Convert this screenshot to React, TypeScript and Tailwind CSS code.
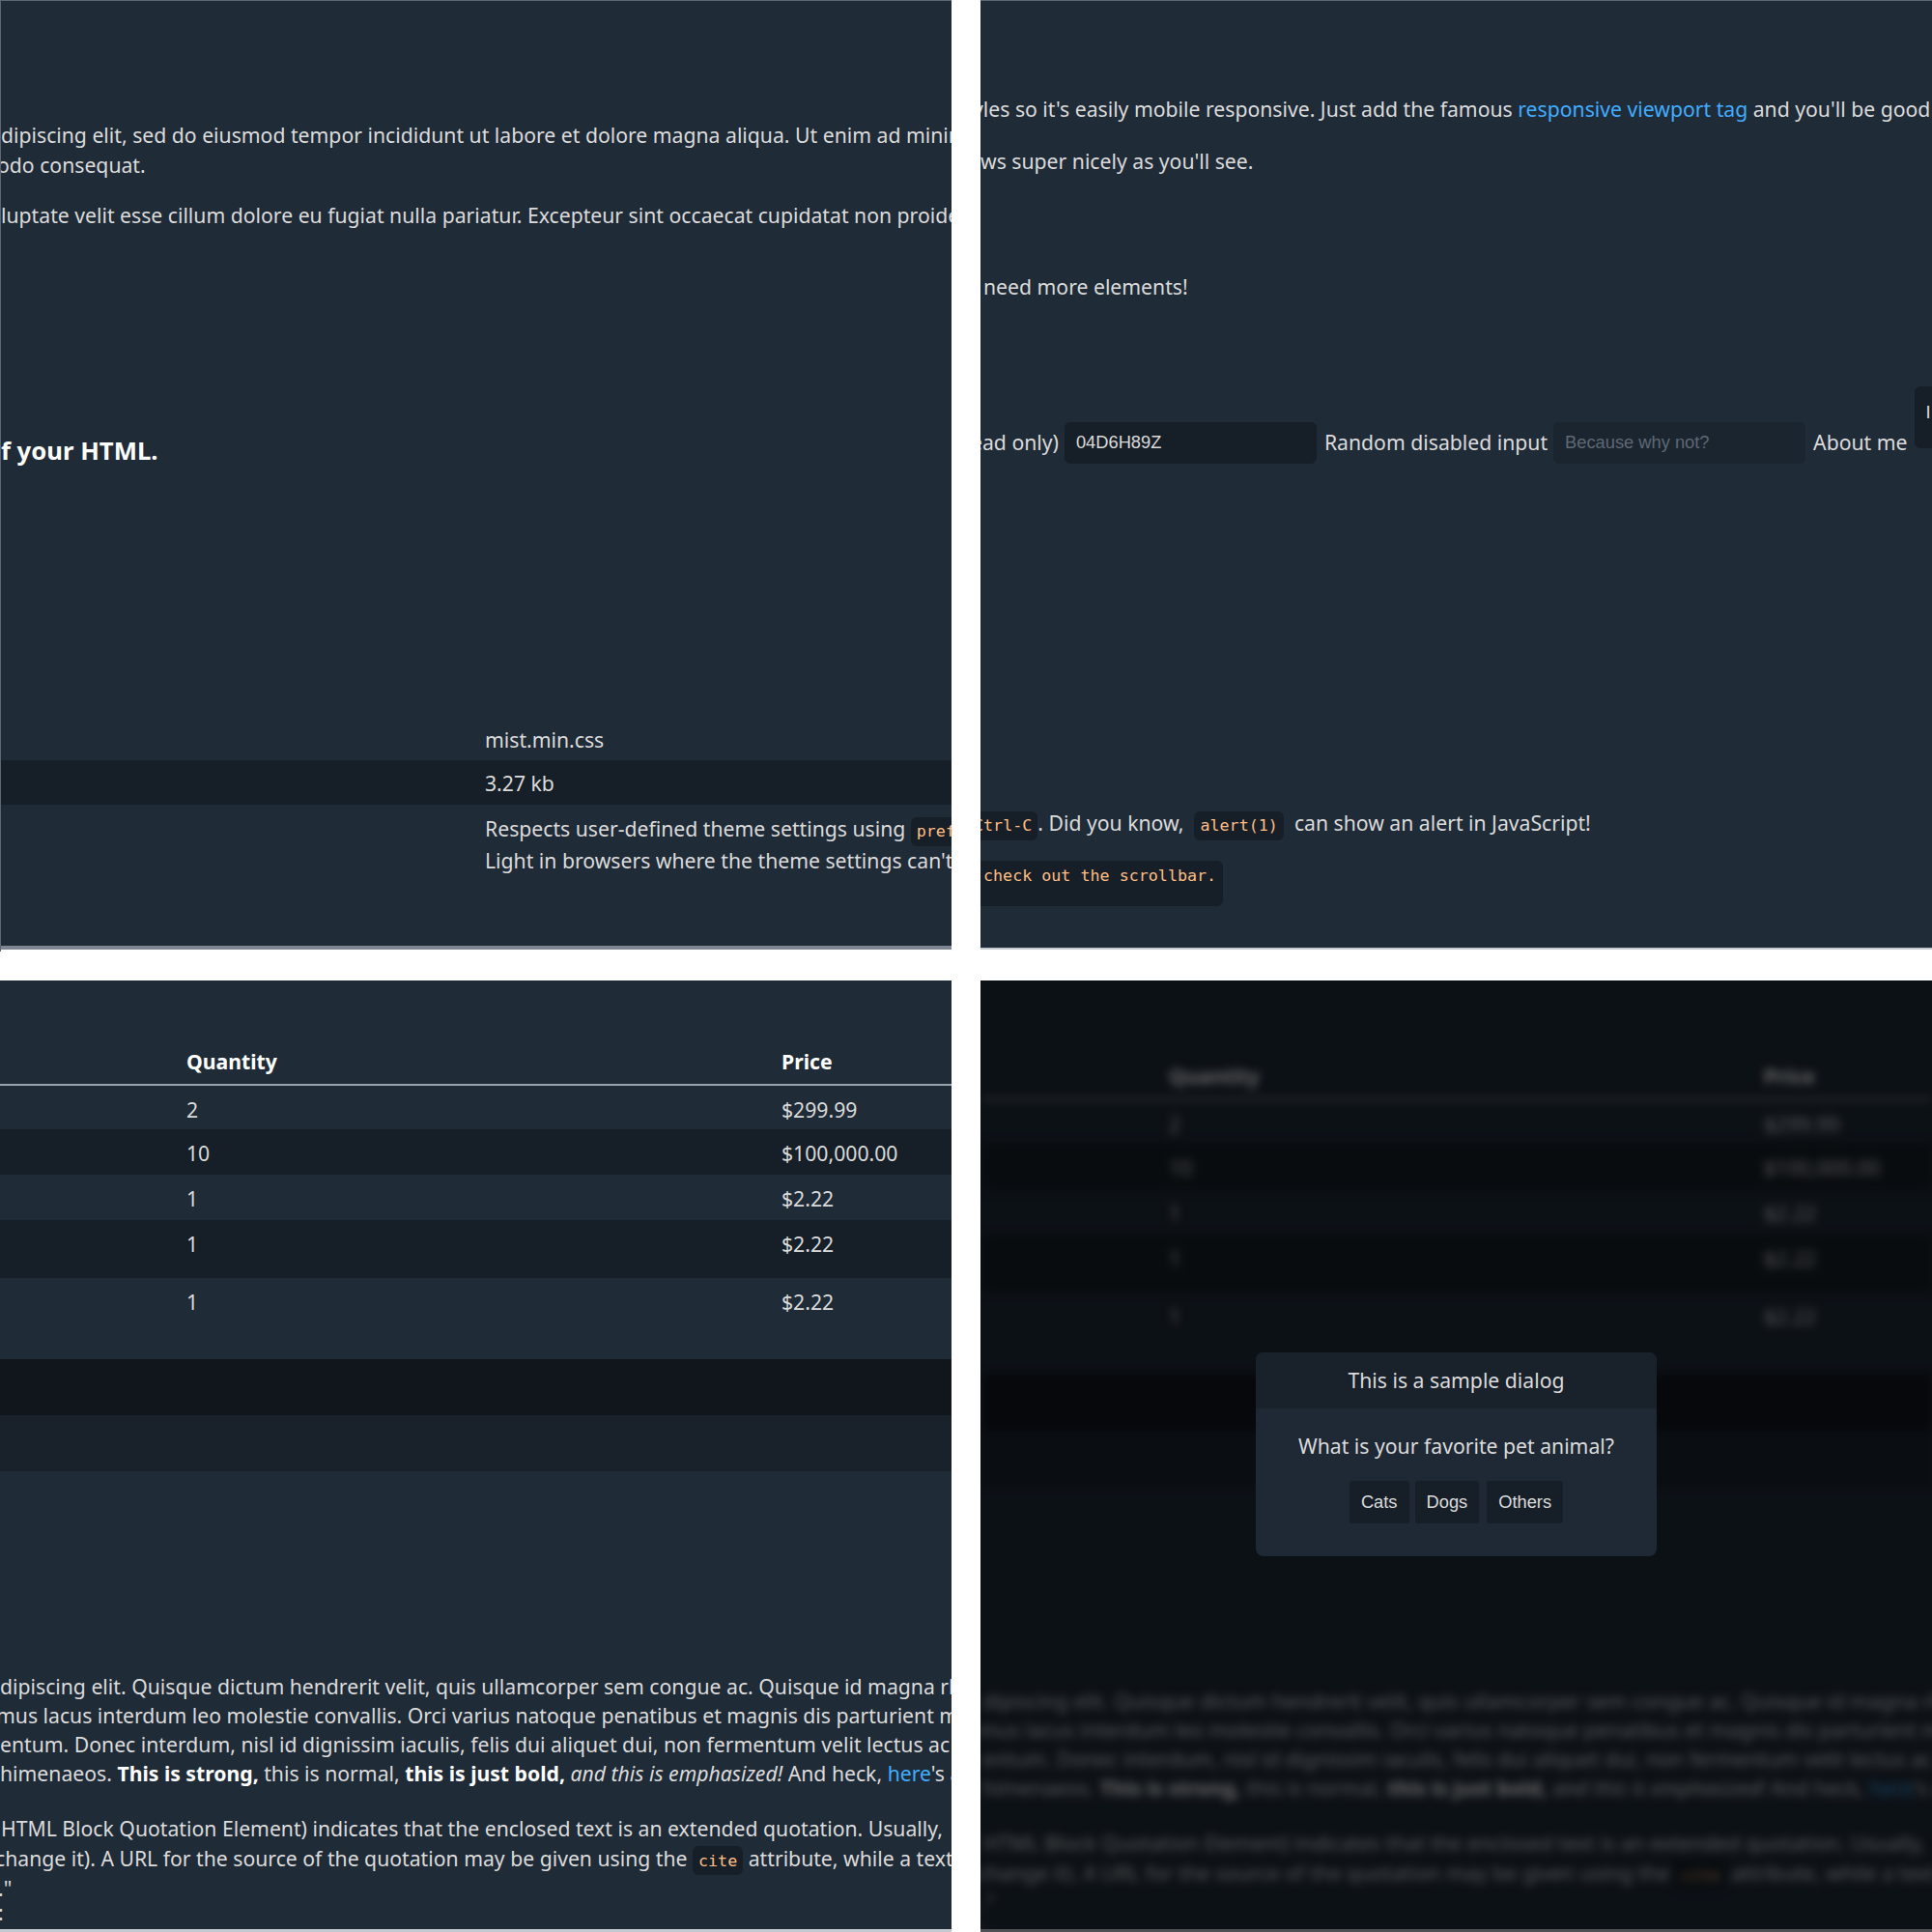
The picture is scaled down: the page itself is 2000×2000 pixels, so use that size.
import React from "react";

const mono = "font-['DejaVu_Sans_Mono',monospace]";
const arial = "font-['Liberation_Sans',Arial,sans-serif]";

function Code({ children, className = "" }: { children: React.ReactNode; className?: string }) {
  return (
    <code
      className={`${mono} inline-block bg-[#161f27] text-[#ffbe85] text-[16.7px] leading-[23px] px-[6px] py-[3.5px] rounded-[6px] align-baseline ${className}`}
    >
      {children}
    </code>
  );
}

function TopLeft() {
  return (
    <div className="flex flex-col overflow-hidden bg-[#202b38] border-t border-l border-[#5d6672]">
      <div className="flex-1 min-h-0 pt-[124px]">
        <p className="whitespace-nowrap">
          dipiscing elit, sed do eiusmod tempor incididunt ut labore et dolore magna aliqua. Ut enim ad minim veniam, quis nostrud
        </p>
        <p className="whitespace-nowrap -ml-[4px]">odo consequat.</p>
        <p className="mt-[21px] whitespace-nowrap">
          luptate velit esse cillum dolore eu fugiat nulla pariatur. Excepteur sint occaecat cupidatat non proident, sunt in culpa
        </p>
        <h3 className="mt-[211px] text-[25.7px] leading-[36px] font-bold text-white whitespace-nowrap">f your HTML.</h3>
        <div className="mt-[256px]">
          <div className="h-[46px] pt-[10px] pl-[501px] whitespace-nowrap">mist.min.css</div>
          <div className="h-[46px] pt-[9px] pl-[501px] whitespace-nowrap bg-[#161f27]">3.27 kb</div>
          <div className="pt-[10px] pl-[501px] whitespace-nowrap">
            Respects user-defined theme settings using <Code>prefers-color-scheme</Code>. Defaults to
            <br />
            Light in browsers where the theme settings can't be detected.
          </div>
        </div>
      </div>
      <div className="h-[4px] bg-[#7c8591]" />
      <div className="h-[2px] bg-white" />
    </div>
  );
}

function TopRight() {
  return (
    <div className="flex flex-col overflow-hidden bg-[#202b38] border-t border-[#5d6672]">
      <div className="flex-1 min-h-0 pt-[97px]">
        <p className="whitespace-nowrap -ml-[8px]">
          yles so it's easily mobile responsive. Just add the famous{" "}
          <a className="text-[#41adff]">responsive viewport tag</a> and you'll be good to go!
        </p>
        <p className="mt-[23px] whitespace-nowrap">ws super nicely as you'll see.</p>
        <p className="mt-[99px] whitespace-nowrap pl-[3px]">need more elements!</p>
        <div className="mt-[88px] flex items-start whitespace-nowrap">
          <span className="mt-[42.6px] -ml-[10px]">ead only)</span>
          <div
            className={`${arial} ml-[6px] mt-[37px] h-[43px] w-[261px] shrink-0 bg-[#161f27] rounded-[6px] pl-[12px] flex items-center text-[18.3px] text-[#dbdbdb]`}
          >
            04D6H89Z
          </div>
          <span className="ml-[8px] mt-[42.6px]">Random disabled input</span>
          <div
            className={`${arial} ml-[6px] mt-[37px] h-[43px] w-[261px] shrink-0 bg-[#1b2530] rounded-[6px] pl-[12px] flex items-center text-[18.3px] text-[#5f6873]`}
          >
            Because why not?
          </div>
          <span className="ml-[8px] mt-[42.6px]">About me</span>
          <div className={`${arial} ml-[7px] h-[64px] w-[40px] shrink-0 bg-[#161f27] rounded-[6px] pl-[12px] pt-[12px] text-[18.3px] text-[#dbdbdb]`}>
            I
          </div>
        </div>
        <p className="mt-[357px] whitespace-nowrap">
          <Code className="-ml-[13px]">Ctrl-C</Code>. Did you know,&nbsp; <Code>alert(1)</Code> &nbsp;can show an alert in JavaScript!
        </p>
        <div className="mt-[21px] h-[47px] w-[251px] bg-[#161f27] rounded-r-[6px] overflow-hidden">
          <pre className={`${mono} text-[16.7px] leading-[22px] text-[#ffbe85] pt-[4px] pl-[3px] whitespace-pre`}>check out the scrollbar.</pre>
        </div>
      </div>
      <div className="h-[2px] bg-[#c3c9d0]" />
      <div className="h-[2px] bg-white" />
    </div>
  );
}

function Scene() {
  const rows = [
    { q: "2", p: "$299.99", h: "h-[45px]", bg: "" },
    { q: "10", p: "$100,000.00", h: "h-[47px]", bg: "bg-[#161f27]" },
    { q: "1", p: "$2.22", h: "h-[47px]", bg: "" },
    { q: "1", p: "$2.22", h: "h-[60px]", bg: "bg-[#161f27]" },
    { q: "1", p: "$2.22", h: "h-[84px]", bg: "" },
  ];
  return (
    <div className="pt-[60px]">
      <div className="h-[49px] pt-[9px] border-b-2 border-[#9aa2ab] grid grid-cols-[193px_616px_1fr] font-bold text-white">
        <span />
        <span>Quantity</span>
        <span>Price</span>
      </div>
      {rows.map((r, i) => (
        <div key={i} className={`${r.h} ${r.bg} pt-[10px] grid grid-cols-[193px_616px_1fr]`}>
          <span />
          <span>{r.q}</span>
          <span>{r.p}</span>
        </div>
      ))}
      <div className="h-[58px] bg-[#11161d]" />
      <div className="h-[58px] bg-[#19212b]" />
      <div className="mt-[208px] leading-[30px] whitespace-nowrap">
        <div>dipiscing elit. Quisque dictum hendrerit velit, quis ullamcorper sem congue ac. Quisque id magna rhoncus,</div>
        <div className="-ml-[4px]">mus lacus interdum leo molestie convallis. Orci varius natoque penatibus et magnis dis parturient montes,</div>
        <div>entum. Donec interdum, nisl id dignissim iaculis, felis dui aliquet dui, non fermentum velit lectus ac quam.</div>
        <div>
          himenaeos. <strong className="font-bold text-white">This is strong,</strong> this is normal,{" "}
          <b className="font-bold text-white">this is just bold,</b> <em className="italic">and this is emphasized!</em> And heck,{" "}
          <a className="text-[#41adff]">here</a>'s a link.
        </div>
      </div>
      <div className="mt-[27px] whitespace-nowrap">
        <div className="pl-[1px]">HTML Block Quotation Element) indicates that the enclosed text is an extended quotation. Usually,</div>
        <div className="-ml-[5px]">change it). A URL for the source of the quotation may be given using the <Code>cite</Code> attribute, while a text</div>
        <div className="-ml-[2px] leading-[27px]">."</div>
        <div className="-ml-[2px] leading-[24px]">:</div>
      </div>
    </div>
  );
}

function BottomLeft() {
  return (
    <div className="flex flex-col overflow-hidden bg-[#202b38]">
      <div className="flex-1 min-h-0">
        <Scene />
      </div>
      <div className="h-[3px] bg-[#c3c9d0]" />
    </div>
  );
}

function BottomRight() {
  return (
    <div className="relative flex flex-col overflow-hidden bg-[#202b38]">
      <div className="flex-1 min-h-0 pl-[2px] pt-[15px] blur-[5px]">
        <Scene />
      </div>
      <div className="h-[3px] bg-[#c3c9d0]" />
      <div className="absolute inset-0 bg-black/60 flex items-center justify-center">
        <div className="mb-[4px] w-[415px] rounded-[8px] overflow-hidden bg-[#1f2935] text-center">
          <div className="h-[58px] pt-[14px] bg-[#19212b]">This is a sample dialog</div>
          <div className="pt-[24.6px] pb-[34px]">
            <div>What is your favorite pet animal?</div>
            <div className={`${arial} mt-[20px] flex justify-center text-[18.3px]`}>
              <span className="h-[44px] px-[12px] flex items-center bg-[#161f27] rounded-[3px]">Cats</span>
              <span className="ml-[6px] h-[44px] px-[12px] flex items-center bg-[#161f27] rounded-[3px]">Dogs</span>
              <span className="ml-[8px] h-[44px] px-[12px] flex items-center bg-[#161f27] rounded-[3px]">Others</span>
            </div>
          </div>
        </div>
      </div>
    </div>
  );
}

export default function App() {
  return (
    <div className="w-[2000px] h-[2000px] bg-white grid grid-cols-[985px_985px] grid-rows-[985px_985px] gap-[30px] font-['Noto_Sans',sans-serif] text-[21.2px] leading-[30.8px] text-[#dbdbdb]">
      <TopLeft />
      <TopRight />
      <BottomLeft />
      <BottomRight />
    </div>
  );
}
